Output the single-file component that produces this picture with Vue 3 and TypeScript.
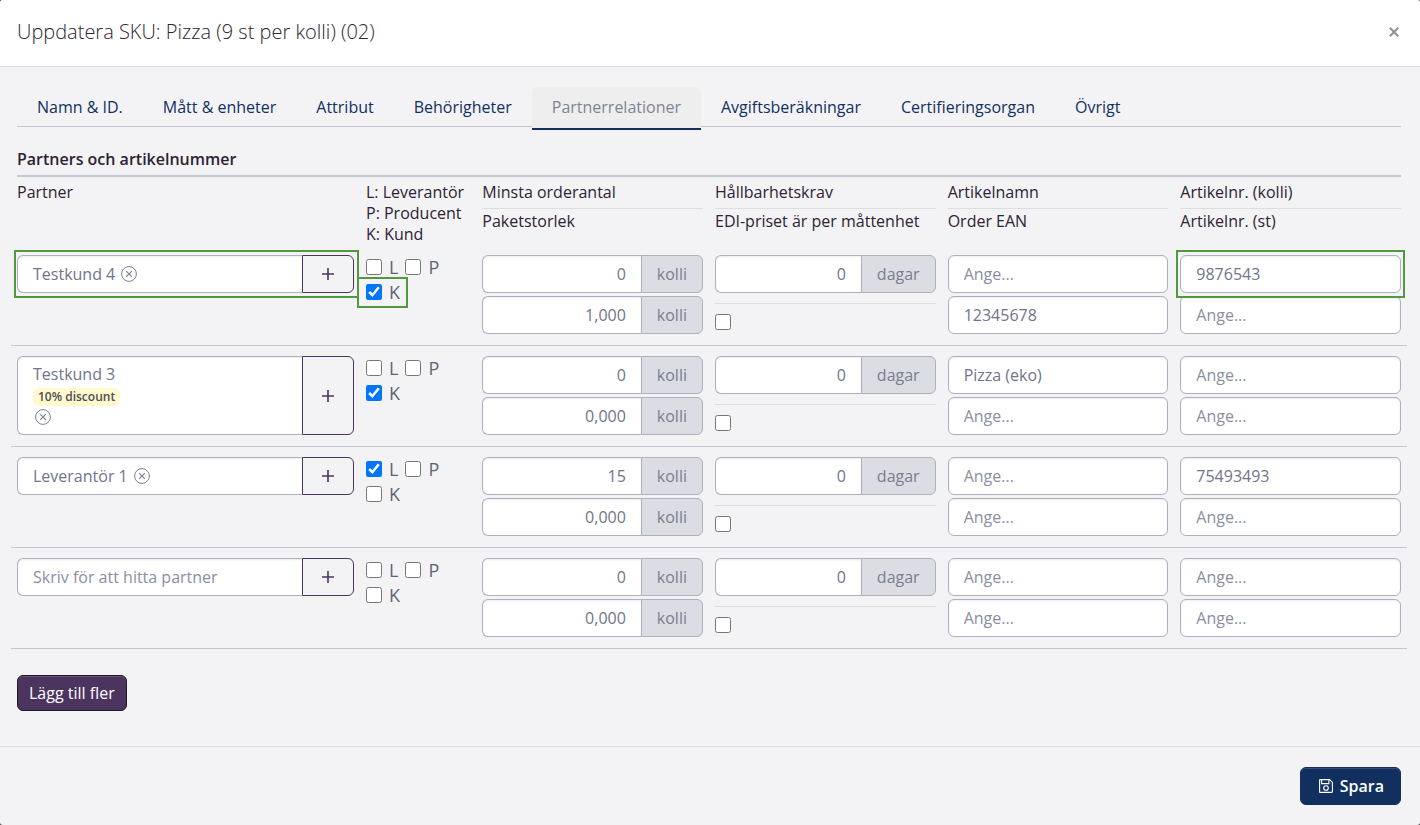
<script setup lang="ts">
import { reactive } from 'vue'

interface Row {
  partner: string
  badge?: string
  roles: { L: boolean; P: boolean; K: boolean }
  minOrder: string
  packSize: string
  shelfLife: string
  edi: boolean
  name: string
  ean: string
  skuPack: string
  skuUnit: string
  marked?: boolean
}

const tabs = [
  'Namn & ID.',
  'Mått & enheter',
  'Attribut',
  'Behörigheter',
  'Partnerrelationer',
  'Avgiftsberäkningar',
  'Certifieringsorgan',
  'Övrigt',
]
const activeTab = 'Partnerrelationer'
const roleKeys = ['L', 'P', 'K'] as const

const emptyRow = (): Row => ({
  partner: '',
  roles: { L: false, P: false, K: false },
  minOrder: '0',
  packSize: '0,000',
  shelfLife: '0',
  edi: false,
  name: '',
  ean: '',
  skuPack: '',
  skuUnit: '',
})

const rows = reactive<Row[]>([
  {
    ...emptyRow(),
    partner: 'Testkund 4',
    roles: { L: false, P: false, K: true },
    packSize: '1,000',
    ean: '12345678',
    skuPack: '9876543',
    marked: true,
  },
  {
    ...emptyRow(),
    partner: 'Testkund 3',
    badge: '10% discount',
    roles: { L: false, P: false, K: true },
    name: 'Pizza (eko)',
  },
  {
    ...emptyRow(),
    partner: 'Leverantör 1',
    roles: { L: true, P: false, K: false },
    minOrder: '15',
    skuPack: '75493493',
  },
  emptyRow(),
])

function clearPartner(row: Row) {
  row.partner = ''
  row.badge = undefined
}
</script>

<template>
  <div class="modal">
    <header class="modal-header">
      <h1>Uppdatera SKU: Pizza (9 st per kolli) (02)</h1>
      <button type="button" class="close" aria-label="Stäng">
        <svg width="10" height="10" viewBox="0 0 10 10">
          <path d="M.8 .8L9.2 9.2M9.2 .8L.8 9.2" fill="none" stroke="currentColor" stroke-width="2.2" />
        </svg>
      </button>
    </header>

    <main class="modal-body">
      <nav class="tabs">
        <a v-for="tab in tabs" :key="tab" href="#" :class="{ active: tab === activeTab }">{{ tab }}</a>
      </nav>

      <h2>Partners och artikelnummer</h2>

      <table>
        <colgroup>
          <col class="c3" />
          <col class="c1" />
          <col class="c2" />
          <col class="c2" />
          <col class="c2" />
          <col class="c2" />
        </colgroup>
        <thead>
          <tr>
            <th>Partner</th>
            <th class="legend">L: Leverantör<br />P: Producent<br />K: Kund</th>
            <th><span class="top">Minsta orderantal</span><span>Paketstorlek</span></th>
            <th><span class="top">Hållbarhetskrav</span><span>EDI-priset är per måttenhet</span></th>
            <th><span class="top">Artikelnamn</span><span>Order EAN</span></th>
            <th><span class="top">Artikelnr. (kolli)</span><span>Artikelnr. (st)</span></th>
          </tr>
        </thead>
        <tbody>
          <tr v-for="(row, i) in rows" :key="i">
            <td>
              <div class="group partner" :class="{ marked: row.marked }">
                <div v-if="row.partner" class="chosen" :class="{ stacked: row.badge }">
                  <span>{{ row.partner }}</span>
                  <span v-if="row.badge" class="badge">{{ row.badge }}</span>
                  <button type="button" class="remove" aria-label="Ta bort partner" @click="clearPartner(row)">
                    <svg width="16" height="16" viewBox="0 0 16 16" fill="none" stroke="currentColor">
                      <circle cx="8" cy="8" r="7.4" />
                      <path d="M5.2 5.2L10.8 10.8M10.8 5.2L5.2 10.8" stroke-width="1.2" />
                    </svg>
                  </button>
                </div>
                <input v-else type="text" placeholder="Skriv för att hitta partner" aria-label="Partner" />
                <button type="button" class="add" aria-label="Ny partner">
                  <svg width="12" height="12" viewBox="0 0 12 12">
                    <path d="M6 0V12M0 6H12" fill="none" stroke="currentColor" stroke-width="1.6" />
                  </svg>
                </button>
              </div>
            </td>
            <td>
              <div class="roles">
                <label v-for="key in roleKeys" :key="key" :class="{ marked: row.marked && key === 'K' }">
                  <input v-model="row.roles[key]" type="checkbox" />{{ key }}
                </label>
              </div>
            </td>
            <td>
              <div class="pair">
                <label class="group">
                  <input v-model="row.minOrder" type="text" class="number" aria-label="Minsta orderantal" />
                  <span class="unit">kolli</span>
                </label>
                <label class="group">
                  <input v-model="row.packSize" type="text" class="number" aria-label="Paketstorlek" />
                  <span class="unit">kolli</span>
                </label>
              </div>
            </td>
            <td>
              <label class="group">
                <input v-model="row.shelfLife" type="text" class="number" aria-label="Hållbarhetskrav" />
                <span class="unit">dagar</span>
              </label>
              <div class="edi">
                <input v-model="row.edi" type="checkbox" aria-label="EDI-priset är per måttenhet" />
              </div>
            </td>
            <td>
              <div class="pair">
                <div class="group"><input v-model="row.name" type="text" placeholder="Ange..." aria-label="Artikelnamn" /></div>
                <div class="group"><input v-model="row.ean" type="text" placeholder="Ange..." aria-label="Order EAN" /></div>
              </div>
            </td>
            <td>
              <div class="pair">
                <div class="group article" :class="{ marked: row.marked }">
                  <input v-model="row.skuPack" type="text" placeholder="Ange..." aria-label="Artikelnr. (kolli)" />
                </div>
                <div class="group"><input v-model="row.skuUnit" type="text" placeholder="Ange..." aria-label="Artikelnr. (st)" /></div>
              </div>
            </td>
          </tr>
        </tbody>
      </table>

      <button type="button" class="more" @click="rows.push(emptyRow())">Lägg till fler</button>
    </main>

    <footer class="modal-footer">
      <button type="button" class="save">
        <svg width="14" height="14" viewBox="0 0 14 14" fill="none" stroke="currentColor" stroke-width="1.1">
          <path d="M1.2 .6H10.6L13.4 3.4V12.8Q13.4 13.4 12.8 13.4H1.2Q.6 13.4 .6 12.8V1.2Q.6 .6 1.2 .6Z" />
          <path d="M2.6 .6V4.6H9.9V.6" />
          <circle cx="7" cy="9" r="2.3" />
        </svg>
        Spara
      </button>
    </footer>
  </div>
</template>

<style>
body {
  margin: 0;
  background: #55555a;
}
</style>

<style scoped>
.modal,
.modal * {
  box-sizing: border-box;
}
.modal {
  display: flex;
  flex-direction: column;
  min-height: 100vh;
  border-radius: 3px;
  overflow: hidden;
  background: #f3f3f6;
  color: #2f2233;
  font: 16px/21px 'Open Sans', 'Noto Sans', sans-serif;
}
button,
input {
  font: inherit;
  margin: 0;
}
button {
  cursor: pointer;
}
.modal-header {
  display: flex;
  align-items: center;
  justify-content: space-between;
  padding: 17px 20px 19px 17px;
  background: #fff;
  border-bottom: 1px solid #dcdde1;
}
h1 {
  margin: 0;
  font-size: 20px;
  line-height: 30px;
  font-weight: 300;
}
.close {
  display: flex;
  padding: 1px;
  border: 0;
  background: none;
  color: #979199;
}
.modal-body {
  flex: 1;
  padding: 20px 19px 35px 17px;
}
.tabs {
  display: flex;
  height: 40px;
  border-bottom: 1px solid #c5c6d1;
}
.tabs a {
  height: 43px;
  padding: 10px 20px 0;
  border-radius: 6px 6px 0 0;
  color: #113060;
  text-decoration: none;
}
.tabs a.active {
  background: #eee;
  border-bottom: 2px solid #113060;
  border-radius: 6px 6px 0 0;
  color: #7f8596;
}
h2 {
  margin: 0;
  padding: 22px 0 6px;
  border-bottom: 2px solid #c5c8d0;
  font-size: 16px;
  line-height: 20px;
  font-weight: 600;
}
table {
  width: calc(100% + 12px);
  margin: 0 -6px;
  table-layout: fixed;
  border-collapse: separate;
  border-spacing: 0;
}
.c3 {
  width: 25%;
}
.c1 {
  width: 8.3333%;
}
.c2 {
  width: 16.6667%;
}
th {
  padding: 5px 6px 0;
  font-weight: 400;
  text-align: left;
  vertical-align: top;
  white-space: nowrap;
}
th span {
  display: block;
}
th .top {
  margin-bottom: 2px;
  padding-bottom: 5px;
  border-bottom: 1px solid #dcdde1;
}
td {
  padding: 10px 6px 11px;
  border-bottom: 1px solid #c5c6d1;
  vertical-align: top;
}
.pair {
  display: grid;
  gap: 3px;
}
.group {
  position: relative;
  display: flex;
  min-height: 38px;
}
.group input,
.chosen {
  flex: 1;
  width: 0;
  min-width: 0;
  padding: 0 15px;
  border: 1px solid #adb1bf;
  border-radius: 6px;
  background: #fff;
  box-shadow: inset 0 1px 2px rgba(0, 0, 0, 0.08);
  color: #70758a;
}
.group input::placeholder {
  color: #8a8fa1;
  opacity: 1;
}
.group input:not(:last-child),
.chosen {
  border-right: 0;
  border-radius: 6px 0 0 6px;
}
.group .number {
  text-align: right;
}
.unit {
  display: flex;
  align-items: center;
  padding: 0 15px;
  border: 1px solid #adb1bf;
  border-radius: 0 6px 6px 0;
  background: #dcdde2;
  color: #787d90;
}
.chosen {
  display: flex;
  align-items: center;
  gap: 6px;
}
.chosen.stacked {
  flex-direction: column;
  align-items: flex-start;
  gap: 3px;
  padding: 7px 15px 9px;
}
.badge {
  padding: 0 5px;
  border-radius: 6px;
  background: #fffacd;
  color: #4d4d55;
  font-size: 12px;
  line-height: 18px;
  font-weight: 600;
}
.remove {
  display: flex;
  padding: 0;
  border: 0;
  background: none;
  color: #7b8092;
}
.stacked .remove {
  margin-left: 2px;
}
.add {
  display: flex;
  align-items: center;
  justify-content: center;
  width: 52px;
  padding: 0;
  border: 1px solid #4b355f;
  border-radius: 0 6px 6px 0;
  background: none;
  color: #4b355f;
}
.roles {
  display: flex;
  flex-wrap: wrap;
  column-gap: 7px;
}
.roles label {
  position: relative;
  display: flex;
  align-items: center;
  gap: 7px;
  color: #5f6472;
  font-size: 18px;
  line-height: 25px;
}
input[type='checkbox'] {
  width: 16px;
  height: 16px;
}
.roles input {
  margin-bottom: 2px;
}
.edi {
  display: flex;
  margin-top: 10px;
  padding-top: 10px;
  border-top: 1px solid #dcdde1;
}
.marked::after {
  content: '';
  position: absolute;
  z-index: 1;
  border: 2px solid #52983f;
  pointer-events: none;
}
.partner.marked::after {
  inset: -5px -5px -5px -3px;
}
.article.marked::after {
  inset: -5px -4px;
}
.roles .marked::after {
  inset: -3px -8px -3px -9px;
}
.more {
  margin-top: 26px;
  padding: 0 11px;
  height: 36px;
  border: 1px solid #221629;
  border-radius: 6px;
  background: #4b355f;
  box-shadow: inset 0 1px 0 rgba(255, 255, 255, 0.15);
  color: #fff;
}
.modal-footer {
  display: flex;
  justify-content: flex-end;
  padding: 20px 19px;
  border-top: 1px solid #dcdde1;
}
.save {
  display: flex;
  align-items: center;
  gap: 7px;
  height: 38px;
  padding: 0 16px 0 18px;
  border: 1px solid #113060;
  border-radius: 6px;
  background: #113060;
  box-shadow: inset 0 1px 0 rgba(255, 255, 255, 0.15);
  color: #fff;
  font-weight: 600;
}
</style>
